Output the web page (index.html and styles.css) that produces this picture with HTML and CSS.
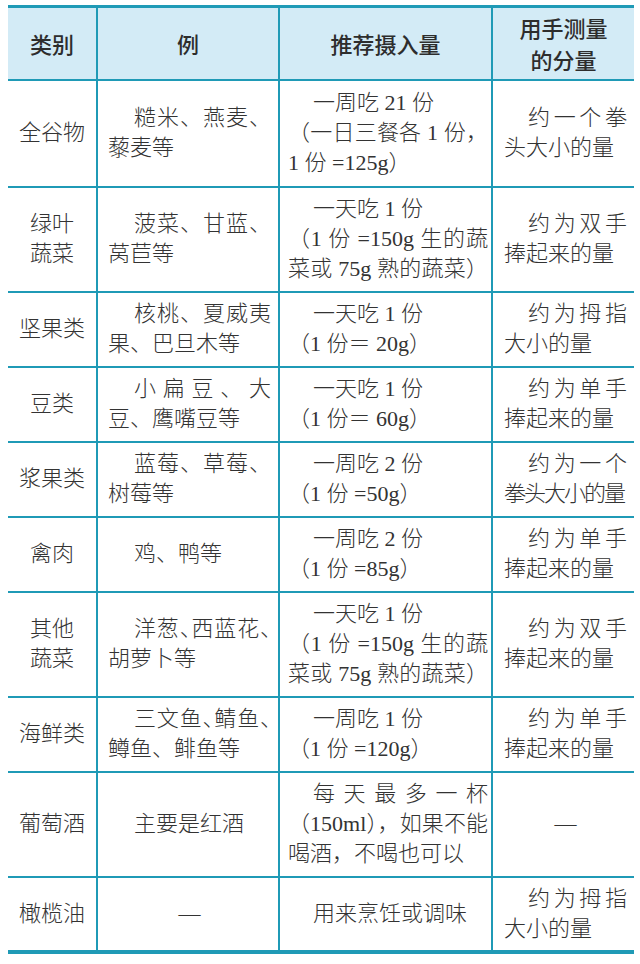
FILE: index.html
```html
<!DOCTYPE html>
<html lang="zh-CN">
<head>
<meta charset="utf-8">
<title>推荐摄入量</title>
<link rel="stylesheet" href="styles.css">
</head>
<body>
<table class="diet">
  <colgroup><col class="c1"><col class="c2"><col class="c3"><col class="c4"></colgroup>
  <thead>
    <tr class="hd">
      <th>类别</th>
      <th>例</th>
      <th>推荐摄入量</th>
      <th><span class="ln">用手测量</span><span class="ln">的分量</span></th>
    </tr>
  </thead>
  <tbody>
    <tr class="r1">
      <td class="cat">全谷物</td>
      <td class="ex"><span class="ln i j">糙米、燕麦、</span><span class="ln">藜麦等</span></td>
      <td class="amt"><span class="ln i">一周吃 21 份</span><span class="ln j">（一日三餐各 1 份，</span><span class="ln">1 份 =125g）</span></td>
      <td class="hand"><span class="ln i j">约一个拳</span><span class="ln">头大小的量</span></td>
    </tr>
    <tr class="r3">
      <td class="cat"><span class="ln">绿叶</span><span class="ln">蔬菜</span></td>
      <td class="ex"><span class="ln i j">菠菜、甘蓝、</span><span class="ln">莴苣等</span></td>
      <td class="amt"><span class="ln i">一天吃 1 份</span><span class="ln j">（1 份 =150g 生的蔬</span><span class="ln j">菜或 75g 熟的蔬菜）</span></td>
      <td class="hand"><span class="ln i j">约为双手</span><span class="ln">捧起来的量</span></td>
    </tr>
    <tr class="r2">
      <td class="cat">坚果类</td>
      <td class="ex"><span class="ln i j">核桃、夏威夷</span><span class="ln">果、巴旦木等</span></td>
      <td class="amt"><span class="ln i">一天吃 1 份</span><span class="ln">（1 份＝ 20g）</span></td>
      <td class="hand"><span class="ln i j">约为拇指</span><span class="ln">大小的量</span></td>
    </tr>
    <tr class="r2">
      <td class="cat">豆类</td>
      <td class="ex"><span class="ln i j">小扁豆、大</span><span class="ln">豆、鹰嘴豆等</span></td>
      <td class="amt"><span class="ln i">一天吃 1 份</span><span class="ln">（1 份＝ 60g）</span></td>
      <td class="hand"><span class="ln i j">约为单手</span><span class="ln">捧起来的量</span></td>
    </tr>
    <tr class="r2">
      <td class="cat">浆果类</td>
      <td class="ex"><span class="ln i j">蓝莓、草莓、</span><span class="ln">树莓等</span></td>
      <td class="amt"><span class="ln i">一周吃 2 份</span><span class="ln">（1 份 =50g）</span></td>
      <td class="hand"><span class="ln i j">约为一个</span><span class="ln n">拳头大小的量</span></td>
    </tr>
    <tr class="r2">
      <td class="cat">禽肉</td>
      <td class="ex"><span class="ln i">鸡、鸭等</span></td>
      <td class="amt"><span class="ln i">一周吃 2 份</span><span class="ln">（1 份 =85g）</span></td>
      <td class="hand"><span class="ln i j">约为单手</span><span class="ln">捧起来的量</span></td>
    </tr>
    <tr class="r3">
      <td class="cat"><span class="ln">其他</span><span class="ln">蔬菜</span></td>
      <td class="ex"><span class="ln i j h">洋葱、西蓝花、</span><span class="ln">胡萝卜等</span></td>
      <td class="amt"><span class="ln i">一天吃 1 份</span><span class="ln j">（1 份 =150g 生的蔬</span><span class="ln j">菜或 75g 熟的蔬菜）</span></td>
      <td class="hand"><span class="ln i j">约为双手</span><span class="ln">捧起来的量</span></td>
    </tr>
    <tr class="r2">
      <td class="cat">海鲜类</td>
      <td class="ex"><span class="ln i j h">三文鱼、鲭鱼、</span><span class="ln">鳟鱼、鲱鱼等</span></td>
      <td class="amt"><span class="ln i">一周吃 1 份</span><span class="ln">（1 份 =120g）</span></td>
      <td class="hand"><span class="ln i j">约为单手</span><span class="ln">捧起来的量</span></td>
    </tr>
    <tr class="r3">
      <td class="cat">葡萄酒</td>
      <td class="ex"><span class="ln i">主要是红酒</span></td>
      <td class="amt"><span class="ln i j">每天最多一杯</span><span class="ln j">（150ml），如果不能</span><span class="ln">喝酒，不喝也可以</span></td>
      <td class="hand mid">—</td>
    </tr>
    <tr class="r2">
      <td class="cat">橄榄油</td>
      <td class="ex mid">—</td>
      <td class="amt"><span class="ln i">用来烹饪或调味</span></td>
      <td class="hand"><span class="ln i j">约为拇指</span><span class="ln">大小的量</span></td>
    </tr>
  </tbody>
</table>
</body>
</html>
```

FILE: styles.css
```css
html, body {
  margin: 0;
  padding: 0;
  background: #ffffff;
}

body {
  font-family: "Liberation Serif", "Noto Sans CJK SC", serif;
  font-weight: 300;
  color: #333333;
}

.diet {
  margin: 5px 0 0 8px;
  width: 626px;
  table-layout: fixed;
  border-collapse: collapse;
  border-top: 3px solid #1f9ab6;
  border-bottom: 4px solid #1f9ab6;
}

.c1 { width: 89px; }
.c2 { width: 182px; }
.c3 { width: 213px; }
.c4 { width: 142px; }

.diet th,
.diet td {
  border: 2px solid #1f9ab6;
  padding: 0;
  vertical-align: middle;
  font-size: 22px;
  line-height: 30px;
}

.diet th:first-child,
.diet td:first-child {
  border-left: none;
}

.diet th:last-child,
.diet td:last-child {
  border-right: none;
}

.diet thead th {
  background: #d3ebf6;
  font-family: "Noto Sans CJK SC", sans-serif;
  font-weight: 500;
  color: #2d2d2d;
  text-align: center;
  line-height: 32px;
}

.hd { height: 73px; }
.r1 { height: 107px; }
.r2 { height: 75px; }
.r3 { height: 105px; }

.ln {
  display: block;
  white-space: nowrap;
}

.cat {
  text-align: center;
}

.ex {
  padding: 0 7px 0 10px !important;
}

.amt {
  padding: 0 3px 0 8px !important;
}

.hand {
  padding: 0 7px 0 11px !important;
}

.ex .i { padding-left: 26px; }
.amt .i { padding-left: 25px; }
.hand .i { padding-left: 24px; }

.j {
  text-align: justify;
  text-align-last: justify;
}

.h {
  font-feature-settings: "halt";
}

.n {
  letter-spacing: -2px;
}

.mid {
  text-align: center;
}
```
